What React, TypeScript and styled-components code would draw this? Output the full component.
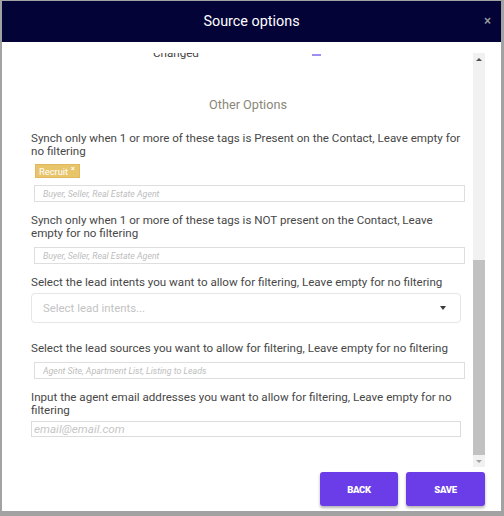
import React, { useEffect, useRef, useState } from 'react';
import styled, { createGlobalStyle } from 'styled-components';

const GlobalStyle = createGlobalStyle`
  html, body {
    margin: 0;
    padding: 0;
    background: #a2a2a2;
    font-family: Roboto, "Liberation Sans", Arial, sans-serif;
  }
  * { box-sizing: border-box; }
`;

const Page = styled.div`
  width: 504px;
  height: 516px;
  padding: 1px 3px 5px 2px;
`;

const Modal = styled.div`
  width: 499px;
  height: 510px;
  background: #fff;
  display: flex;
  flex-direction: column;
`;

const Header = styled.div`
  height: 41px;
  flex: none;
  background: #030338;
  display: flex;
  align-items: center;
  justify-content: center;
  position: relative;
`;

const Title = styled.h2`
  margin: 0;
  color: #fff;
  font-size: 14.4px;
  font-weight: 400;
`;

const Close = styled.button`
  position: absolute;
  right: 10px;
  top: 13px;
  border: 0;
  background: none;
  color: #9a9a9a;
  font-size: 12px;
  font-weight: 700;
  padding: 0;
  line-height: 14px;
  cursor: pointer;
`;

const Body = styled.div`
  display: flex;
  align-items: flex-start;
  height: 425px;
  flex: none;
  padding-top: 11px;
`;

const Scroller = styled.div`
  width: 471px;
  height: 414px;
  flex: none;
  overflow-y: scroll;
  padding: 0 8px 30px 29px;
  scrollbar-width: none;

  &::-webkit-scrollbar {
    display: none;
  }
`;

const Rail = styled.div`
  width: 12px;
  height: 414px;
  background: #f1f1f1;
  display: flex;
  flex-direction: column;
`;

const RailButton = styled.div`
  height: 12px;
  flex: none;
  display: flex;
  align-items: center;
  justify-content: center;
`;

const Arrow = styled.span<{ $down?: boolean }>`
  width: 0;
  height: 0;
  border-left: 3px solid transparent;
  border-right: 3px solid transparent;
  ${p => (p.$down
    ? 'border-top: 3px solid #a3a3a3;'
    : 'border-bottom: 3px solid #505050;')}
`;

const Track = styled.div`
  flex: 1;
  position: relative;
`;

const Thumb = styled.div`
  position: absolute;
  left: 0;
  right: 0;
  background: #c1c1c1;
`;

const SectionTitle = styled.div<{ $first?: boolean }>`
  text-align: center;
  color: #8a8777;
  font-size: 12.7px;
  line-height: 16px;
  margin: ${p => (p.$first ? '32px 0 14px' : '30px 0 19px')};
`;

const MapRow = styled.div`
  display: flex;
  align-items: center;
  height: 28px;
  padding-left: 122px;
  font-size: 11.6px;
  color: #444;
`;

const MapLabel = styled.span`
  width: 159px;
`;

const Dash = styled.span`
  width: 9px;
  height: 1.5px;
  margin-top: 4px;
  background: #9d8ef2;
`;

const Field = styled.div<{ $top: number }>`
  margin-top: ${p => p.$top}px;
`;

const Label = styled.div<{ $gap: number }>`
  font-size: 11.6px;
  line-height: 13px;
  color: #474747;
  margin-bottom: ${p => p.$gap}px;
`;

const TagRow = styled.div`
  display: flex;
  margin: 0 0 7px 4px;
`;

const Tag = styled.span`
  height: 14px;
  display: inline-flex;
  align-items: center;
  gap: 3px;
  padding: 0 4px 0 3px;
  background: #e8c46b;
  border: 1px solid #e0b95d;
  color: #fff;
  font-size: 9.3px;

  b {
    font-size: 7px;
    font-weight: 700;
    margin-top: -4px;
  }
`;

const TextInput = styled.input<{ $size: number }>`
  display: block;
  width: 431px;
  height: 17px;
  margin-left: 3px;
  border: 1px solid #dedede;
  padding: 0 8px;
  font-family: inherit;
  font-size: ${p => p.$size}px;
  font-style: italic;
  outline: none;

  &::placeholder {
    color: #bdbdbd;
  }
`;

const Select = styled.div`
  width: 430px;
  height: 30px;
  border: 1px solid #e6e6e6;
  border-radius: 4px;
  display: flex;
  align-items: center;
  justify-content: space-between;
  padding: 0 14px 0 11px;
  font-size: 11.4px;
  color: #c3c3c3;
`;

const Caret = styled.span`
  width: 0;
  height: 0;
  border-left: 3.5px solid transparent;
  border-right: 3.5px solid transparent;
  border-top: 4px solid #3a3a3a;
`;

const EmailInput = styled.input`
  display: block;
  width: 430px;
  height: 16px;
  border: 1px solid #dcdcdc;
  padding: 0 2px;
  font-family: inherit;
  font-size: 11.7px;
  font-style: italic;
  outline: none;

  &::placeholder {
    color: #c6c6c6;
  }
`;

const Footer = styled.div`
  flex: none;
  display: flex;
  justify-content: flex-end;
  gap: 8px;
  padding: 5px 16px 5px 0;
`;

const Button = styled.button<{ $w: number }>`
  width: ${p => p.$w}px;
  height: 34px;
  border: 0;
  border-radius: 3px;
  background: #6a3de8;
  color: #fff;
  font-family: inherit;
  font-size: 9.5px;
  font-weight: 900;
  letter-spacing: -0.3px;
  box-shadow: 0 2px 3px rgba(0, 0, 0, 0.3);
  cursor: pointer;
`;

const mapped = [
  'First Name', 'Last Name', 'Email', 'Phone', 'Address', 'City',
  'State', 'Zip', 'Tags', 'Stage', 'Created', 'Updated', 'Changed',
];

const App: React.FC = () => {
  const scrollRef = useRef<HTMLDivElement>(null);
  const [thumb, setThumb] = useState({ top: 195, height: 195 });

  useEffect(() => {
    const el = scrollRef.current;
    if (!el) return;
    el.scrollTop = 99999;
    const track = 414 - 24;
    const update = () => {
      const h = (track * el.clientHeight) / el.scrollHeight;
      const range = el.scrollHeight - el.clientHeight;
      const top = range > 0 ? ((track - h) * el.scrollTop) / range : 0;
      setThumb({ top, height: h });
    };
    update();
    el.addEventListener('scroll', update);
    return () => el.removeEventListener('scroll', update);
  }, []);

  return (
    <>
      <GlobalStyle />
      <Page>
        <Modal>
          <Header>
            <Title>Source options</Title>
            <Close>×</Close>
          </Header>
          <Body>
            <Scroller ref={scrollRef}>
              <SectionTitle $first>Sync Triggers</SectionTitle>
              {mapped.map(name => (
                <MapRow key={name}>
                  <MapLabel>{name}</MapLabel>
                  <Dash />
                </MapRow>
              ))}

              <SectionTitle>Other Options</SectionTitle>

              <Field $top={0}>
                <Label $gap={6}>
                  Synch only when 1 or more of these tags is Present on the Contact, Leave empty for no filtering
                </Label>
                <TagRow>
                  <Tag>Recruit <b>×</b></Tag>
                </TagRow>
                <TextInput $size={8.8} placeholder="Buyer, Seller, Real Estate Agent" />
              </Field>

              <Field $top={12}>
                <Label $gap={7}>
                  Synch only when 1 or more of these tags is NOT present on the Contact, Leave empty for no filtering
                </Label>
                <TextInput $size={8.8} placeholder="Buyer, Seller, Real Estate Agent" />
              </Field>

              <Field $top={12}>
                <Label $gap={4}>
                  Select the lead intents you want to allow for filtering, Leave empty for no filtering
                </Label>
                <Select>
                  <span>Select lead intents...</span>
                  <Caret />
                </Select>
              </Field>

              <Field $top={19}>
                <Label $gap={7}>
                  Select the lead sources you want to allow for filtering, Leave empty for no filtering
                </Label>
                <TextInput $size={8.8} placeholder="Agent Site, Apartment List, Listing to Leads" />
              </Field>

              <Field $top={12}>
                <Label $gap={4}>
                  Input the agent email addresses you want to allow for filtering, Leave empty for no filtering
                </Label>
                <EmailInput placeholder="email@email.com" />
              </Field>
            </Scroller>
            <Rail>
              <RailButton><Arrow /></RailButton>
              <Track>
                <Thumb style={{ top: thumb.top, height: thumb.height }} />
              </Track>
              <RailButton><Arrow $down /></RailButton>
            </Rail>
          </Body>
          <Footer>
            <Button $w={78}>BACK</Button>
            <Button $w={79}>SAVE</Button>
          </Footer>
        </Modal>
      </Page>
    </>
  );
};

export default App;
